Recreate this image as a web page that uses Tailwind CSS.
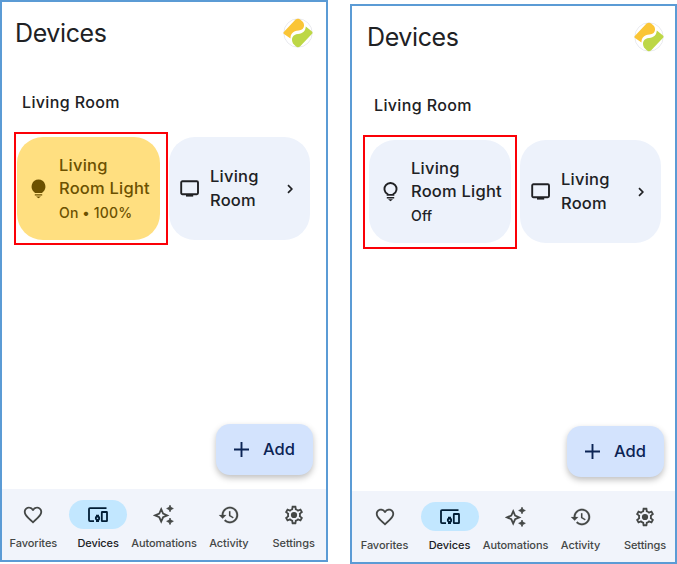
<!DOCTYPE html>
<html lang="en">
<head>
<meta charset="utf-8">
<title>Devices</title>
<script src="https://cdn.jsdelivr.net/npm/@tailwindcss/browser@4"></script>
</head>
<body class="bg-white">
<svg class="hidden">
  <symbol id="logo" viewBox="0 0 30 30"><circle cx="15" cy="15" r="14.2" fill="#fff" stroke="#e3e5ea" stroke-width=".8"/><path d="M.8 14 12.500 1.600Q15-.2 17.200 1.400L20 4C22.500 8 20.500 12 15.500 12.600C10 13 7.500 16 7.500 20.500L1 16Q-.1 15 .8 14Z" fill="#fac536"/><path d="M29.300 15.500 17 28.400Q15 30 13 28.500L10 25.500C7.500 20 10 16.500 15 16C20 15.500 22.500 13 22.800 8.500L29 13.500Q30 14.500 29.300 15.500Z" fill="#bdd746"/></symbol>
  <symbol id="tv" viewBox="0 0 20 18"><rect x="1.200" y="1.200" width="16.800" height="13" rx="1.200" fill="none" stroke="currentColor" stroke-width="1.900"/><path d="M6 14h7.200v2.600H6z" fill="currentColor"/></symbol>
  <symbol id="heart" viewBox="0 0 24 24"><path fill="currentColor" d="M16.500 3c-1.740 0-3.410.81-4.500 2.090C10.910 3.810 9.240 3 7.500 3 4.420 3 2 5.420 2 8.500c0 3.780 3.400 6.860 8.550 11.540L12 21.350l1.450-1.320C18.600 15.360 22 12.280 22 8.500 22 5.420 19.580 3 16.500 3zm-4.400 15.550l-.1.100-.1-.1C7.140 14.240 4 11.390 4 8.500 4 6.500 5.500 5 7.500 5c1.540 0 3.040.99 3.570 2.360h1.870C13.460 5.990 14.960 5 16.500 5c2 0 3.500 1.500 3.500 3.500 0 2.890-3.140 5.740-7.900 10.050z"/></symbol>
  <symbol id="devices" viewBox="0 0 22 18"><g fill="none" stroke="currentColor" stroke-width="1.800"><path d="M19.500 2.100H3Q2 2.100 2 3.100V14.100Q2 15.100 3 15.100H7"/><rect x="14.800" y="6" width="5.200" height="9.200" rx=".4"/><circle cx="10.500" cy="12.200" r="1.700"/></g><path d="M9 8.700h3v2H9zM9 13.900h3v2.200H9z" fill="currentColor"/></symbol>
  <symbol id="sparkle" viewBox="0 0 22 22"><path d="M8.200 5.200 10.100 9.500 14.300 11.400 10.100 13.300 8.200 17.600 6.300 13.300 2.100 11.400 6.300 9.500Z" fill="none" stroke="currentColor" stroke-width="1.800"/><path d="m17 1.200 1 2.300 2.300 1-2.300 1-1 2.300-1-2.300-2.300-1 2.300-1zM17 14l1 2.300 2.300 1-2.300 1-1 2.300-1-2.300-2.300-1 2.300-1z" fill="currentColor" stroke="currentColor" stroke-width=".8"/></symbol>
  <symbol id="history" viewBox="0 0 24 24"><path fill="currentColor" stroke="currentColor" stroke-width=".2" d="M13 3c-4.970 0-9 4.030-9 9H1l3.890 3.890.07.14L9 12H6c0-3.870 3.130-7 7-7s7 3.130 7 7-3.130 7-7 7c-1.930 0-3.680-.79-4.940-2.060l-1.420 1.420C8.270 19.990 10.510 21 13 21c4.970 0 9-4.030 9-9s-4.030-9-9-9zm-1 5v5l4.280 2.540.72-1.210-3.500-2.080V8H12z"/></symbol>
  <symbol id="gear" viewBox="0 0 24 24"><path fill="currentColor" d="M19.430 12.980c.04-.32.07-.64.07-.98 0-.34-.03-.66-.07-.98l2.110-1.650c.19-.15.24-.42.12-.64l-2-3.460c-.09-.16-.26-.25-.44-.25-.06 0-.12.01-.17.03l-2.490 1c-.52-.4-1.080-.73-1.690-.98l-.38-2.650C14.460 2.180 14.250 2 14 2h-4c-.25 0-.46.18-.49.42l-.38 2.650c-.61.25-1.170.59-1.690.98l-2.490-1c-.06-.02-.12-.03-.18-.03-.17 0-.34.09-.43.25l-2 3.460c-.13.22-.07.49.12.64l2.110 1.650c-.04.32-.07.65-.07.98 0 .33.03.66.07.98l-2.110 1.650c-.19.15-.24.42-.12.64l2 3.460c.09.16.26.25.44.25.06 0 .12-.01.17-.03l2.490-1c.52.4 1.080.73 1.690.98l.38 2.650c.03.24.24.42.49.42h4c.25 0 .46-.18.49-.42l.38-2.650c.61-.25 1.170-.59 1.690-.98l2.490 1c.06.02.12.03.18.03.17 0 .34-.09.43-.25l2-3.460c.12-.22.07-.49-.12-.64l-2.110-1.650zm-1.980-1.710c.04.31.05.52.05.73 0 .21-.02.43-.05.73l-.14 1.130.89.7 1.080.84-.7 1.210-1.270-.51-1.040-.42-.9.68c-.43.32-.84.56-1.250.73l-1.060.43-.16 1.130-.2 1.350h-1.400l-.19-1.350-.16-1.130-1.060-.43c-.43-.18-.83-.41-1.230-.71l-.91-.7-1.060.43-1.270.51-.7-1.210 1.080-.84.89-.7-.14-1.130c-.03-.31-.05-.54-.05-.74s.02-.43.05-.73l.14-1.130-.89-.7-1.080-.84.7-1.210 1.270.51 1.040.42.9-.68c.43-.32.84-.56 1.250-.73l1.060-.43.16-1.130.2-1.350h1.390l.19 1.350.16 1.130 1.060.43c.43.18.83.41 1.230.71l.91.7 1.060-.43 1.270-.51.7 1.210-1.070.85-.89.7.14 1.130z"/><circle cx="12" cy="12" r="3.400" fill="currentColor"/></symbol>
</svg>

<div class="relative flex h-[564px] w-[677px] items-start justify-between overflow-hidden font-['Inter',sans-serif] text-[#202124]">

  <!-- Light on -->
  <section class="relative flex h-[562px] w-[328px] flex-col border-2 border-[#5b9bd5] bg-white">
    <header class="flex h-[62px] items-center justify-between pr-[13px] pl-[13px]">
      <h1 class="pt-[2px] text-[25px] tracking-[-0.4px]">Devices</h1>
      <svg class="size-[30px]"><use href="#logo"/></svg>
    </header>
    <h2 class="mt-[24px] h-[28px] pl-[20px] text-[16px] leading-[28px] font-[480] tracking-[0.36px]">Living Room</h2>
    <div class="mt-[21px] flex gap-[9px] pl-[15px]">
      <article class="flex h-[103px] w-[143px] items-center rounded-[26px] bg-[#ffdf80] pl-[13px] text-[#6c5100]">
        <svg class="h-[20px] w-[17px] shrink-0" viewBox="0 0 17 20"><path d="M8.500 .6a7 7 0 0 1 4.500 12.300Q12 13.600 11.800 14.100H5.200Q5 13.600 4 12.900A7 7 0 0 1 8.500 .6ZM4.800 15.300h7.400v1.300H4.800ZM6 17.400h5L8.500 19.200Z" fill="currentColor"/></svg>
        <div class="ml-[12px] whitespace-nowrap">
          <div class="text-[16.500px] leading-[23.500px] font-[480] tracking-[0.22px]">Living<br>Room Light</div>
          <div class="text-[14px] leading-[23px] font-[480] tracking-[0.15px]">On • 100%</div>
        </div>
      </article>
      <article class="flex h-[103px] w-[141px] items-center rounded-[26px] bg-[#edf2fb] pl-[11px]">
        <svg class="h-[18px] w-[20px] shrink-0"><use href="#tv"/></svg>
        <div class="ml-[10px] w-[72px] text-[16.500px] leading-[23.500px] font-[480] tracking-[0.22px]">Living<br>Room</div>
        <svg class="ml-[4px] h-[10px] w-[8px]" viewBox="0 0 8 10"><path d="M2 1.200 5.800 5 2 8.800" fill="none" stroke="currentColor" stroke-width="1.700"/></svg>
      </article>
    </div>
    <button class="mt-[184px] mr-[13px] flex h-[51px] w-[97px] items-center self-end rounded-[14px] bg-[#d3e3fd] pl-[17px] text-[#0b2455] shadow-[0_3px_6px_rgba(0,0,0,0.25)]">
      <svg class="size-[17px]" viewBox="0 0 17 17"><path d="M8.500 1v15M1 8.500h15" stroke="currentColor" stroke-width="1.900"/></svg>
      <span class="ml-[13px] text-[16.500px] font-[480]">Add</span>
    </button>
    <nav class="mt-auto flex h-[71px] bg-[#f1f4fb] text-[11px] font-[480] tracking-[-0.08px] text-[#444746]">
      <div class="-ml-[1px] flex w-[65px] flex-col items-center pt-[11px]"><div class="flex h-[29px] items-center"><svg class="size-[22px]"><use href="#heart"/></svg></div><span class="mt-[6px] leading-[16px]">Favorites</span></div>
      <div class="flex w-[65px] flex-col items-center pt-[11px] text-[#202124]"><div class="flex h-[29px] w-[58px] items-center justify-center rounded-full bg-[#c2e7ff] text-[#001d35]"><svg class="h-[18px] w-[22px]"><use href="#devices"/></svg></div><span class="mt-[6px] leading-[16px]">Devices</span></div>
      <div class="ml-[1px] flex w-[65px] flex-col items-center pt-[11px]"><div class="flex h-[29px] items-center"><svg class="size-[22px]"><use href="#sparkle"/></svg></div><span class="mt-[6px] leading-[16px]">Automations</span></div>
      <div class="flex w-[65px] flex-col items-center pt-[11px]"><div class="flex h-[29px] items-center"><svg class="size-[22px]"><use href="#history"/></svg></div><span class="mt-[6px] leading-[16px]">Activity</span></div>
      <div class="flex w-[65px] flex-col items-center pt-[11px]"><div class="flex h-[29px] items-center"><svg class="size-[22px]"><use href="#gear"/></svg></div><span class="mt-[6px] leading-[16px]">Settings</span></div>
    </nav>
    <div class="absolute top-[130px] left-[12px] h-[113px] w-[154px] border-2 border-[#fb0007]"></div>
  </section>

  <!-- Light off -->
  <section class="relative mt-[4px] flex h-[560px] w-[327px] flex-col border-2 border-[#5b9bd5] bg-white">
    <header class="flex h-[62px] items-center justify-between pr-[11px] pl-[15px]">
      <h1 class="pt-[2px] text-[25px] tracking-[-0.4px]">Devices</h1>
      <svg class="size-[30px]"><use href="#logo"/></svg>
    </header>
    <h2 class="mt-[23px] h-[28px] pl-[22px] text-[16px] leading-[28px] font-[480] tracking-[0.36px]">Living Room</h2>
    <div class="mt-[21px] flex gap-[9px] pl-[17px]">
      <article class="flex h-[103px] w-[142px] items-center rounded-[26px] bg-[#edf2fb] pl-[13px]">
        <svg class="h-[20px] w-[17px] shrink-0" viewBox="0 0 17 20"><path d="M5.600 12.900V12.200A6 6 0 1 1 11.400 12.200V12.900Z" fill="none" stroke="currentColor" stroke-width="1.900"/><path d="M4.800 15h7.400v1.500H4.800ZM6 17.300h5L8.500 19.200Z" fill="currentColor"/></svg>
        <div class="ml-[12px] whitespace-nowrap">
          <div class="text-[16.500px] leading-[23.500px] font-[480] tracking-[0.22px]">Living<br>Room Light</div>
          <div class="text-[14px] leading-[23px] font-[480] tracking-[0.15px]">Off</div>
        </div>
      </article>
      <article class="flex h-[103px] w-[141px] items-center rounded-[26px] bg-[#edf2fb] pl-[11px]">
        <svg class="h-[18px] w-[20px] shrink-0"><use href="#tv"/></svg>
        <div class="ml-[10px] w-[72px] text-[16.500px] leading-[23.500px] font-[480] tracking-[0.22px]">Living<br>Room</div>
        <svg class="ml-[4px] h-[10px] w-[8px]" viewBox="0 0 8 10"><path d="M2 1.200 5.800 5 2 8.800" fill="none" stroke="currentColor" stroke-width="1.700"/></svg>
      </article>
    </div>
    <button class="mt-[183px] mr-[11px] flex h-[51px] w-[97px] items-center self-end rounded-[14px] bg-[#d3e3fd] pl-[17px] text-[#0b2455] shadow-[0_3px_6px_rgba(0,0,0,0.25)]">
      <svg class="size-[17px]" viewBox="0 0 17 17"><path d="M8.500 1v15M1 8.500h15" stroke="currentColor" stroke-width="1.900"/></svg>
      <span class="ml-[13px] text-[16.500px] font-[480]">Add</span>
    </button>
    <nav class="mt-auto flex h-[71px] bg-[#f1f4fb] text-[11px] font-[480] tracking-[-0.08px] text-[#444746]">
      <div class="flex w-[65px] shrink-0 flex-col items-center pt-[11px]"><div class="flex h-[29px] items-center"><svg class="size-[22px]"><use href="#heart"/></svg></div><span class="mt-[6px] leading-[16px]">Favorites</span></div>
      <div class="flex w-[65px] shrink-0 flex-col items-center pt-[11px] text-[#202124]"><div class="flex h-[29px] w-[58px] items-center justify-center rounded-full bg-[#c2e7ff] text-[#001d35]"><svg class="h-[18px] w-[22px]"><use href="#devices"/></svg></div><span class="mt-[6px] leading-[16px]">Devices</span></div>
      <div class="ml-[1px] flex w-[65px] shrink-0 flex-col items-center pt-[11px]"><div class="flex h-[29px] items-center"><svg class="size-[22px]"><use href="#sparkle"/></svg></div><span class="mt-[6px] leading-[16px]">Automations</span></div>
      <div class="flex w-[65px] shrink-0 flex-col items-center pt-[11px]"><div class="flex h-[29px] items-center"><svg class="size-[22px]"><use href="#history"/></svg></div><span class="mt-[6px] leading-[16px]">Activity</span></div>
      <div class="-mr-[2px] flex min-w-0 flex-1 flex-col items-center pt-[11px]"><div class="flex h-[29px] items-center"><svg class="size-[22px]"><use href="#gear"/></svg></div><span class="mt-[6px] leading-[16px]">Settings</span></div>
    </nav>
    <div class="absolute top-[129px] left-[11px] h-[114px] w-[154px] border-2 border-[#fb0007]"></div>
  </section>
</div>
</body>
</html>
